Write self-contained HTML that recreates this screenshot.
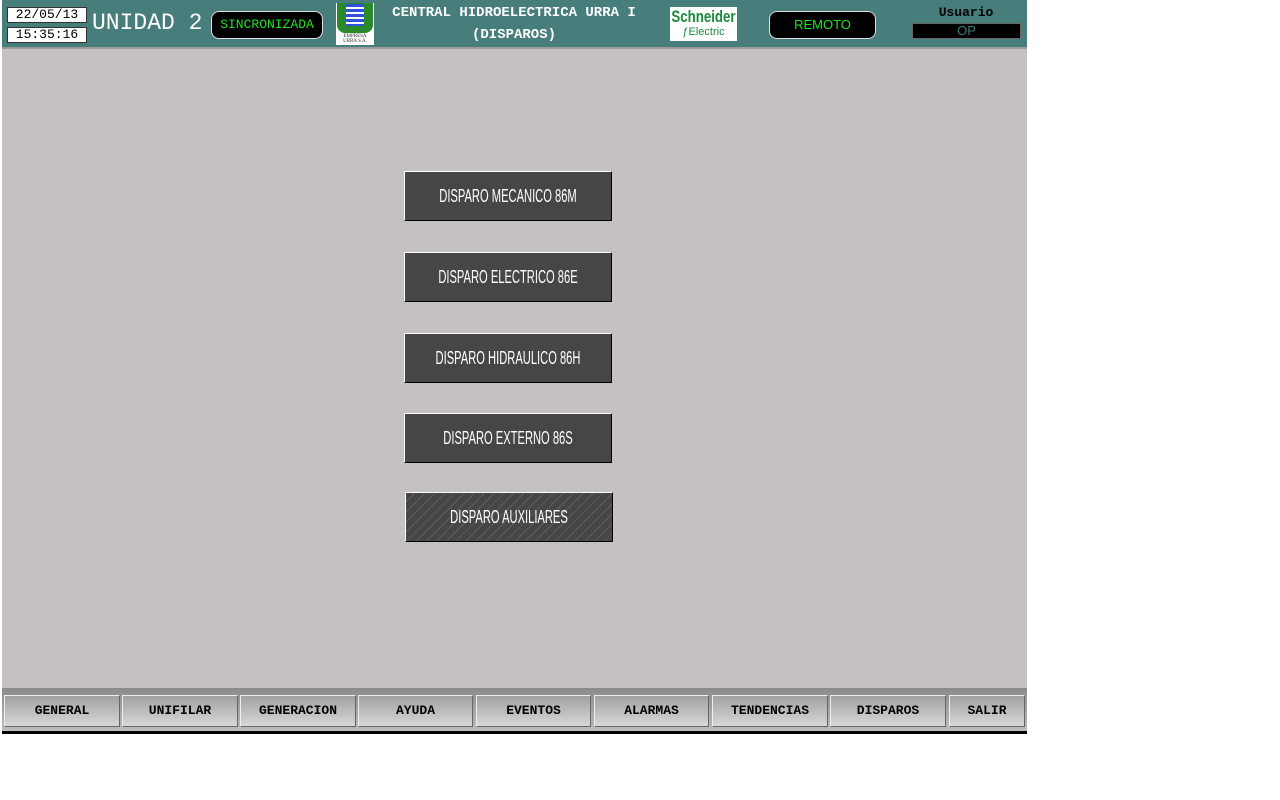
<!DOCTYPE html>
<html><head><style>
body{margin:0;width:1280px;height:800px;background:#fff;position:relative;overflow:hidden;font-family:"Liberation Mono",monospace}
.a{position:absolute}
#hdr{left:2px;top:0;width:1025px;height:47px;background:#477d7b}
#main{left:2px;top:47px;width:1025px;height:641px;background:#c4c0c4;border-top:2px solid #9a9a9a;box-sizing:border-box}
#foot{left:2px;top:688px;width:1025px;height:43px;background:linear-gradient(#8a8a8a,#bdbdbd)}
#line{left:2px;top:731px;width:1025px;height:3px;background:#000}
.fb{position:absolute;top:695px;height:32px;box-sizing:border-box;border:1px solid;border-color:#eee #666 #666 #eee;background:linear-gradient(#a0a0a0,#d8d8d8);font:bold 13px "Liberation Mono",monospace;text-align:center;line-height:30px;color:#000}
.mb{position:absolute;left:404px;width:208px;height:50px;box-sizing:border-box;background:#464646;border:1px solid;border-color:#fff #000 #000 #fff;color:#fff;font:18px "Liberation Sans",sans-serif;line-height:48px;white-space:nowrap;overflow:hidden}
.mb span{position:absolute;left:50%;top:0;transform:translateX(-50%) scaleX(0.62)}
.box{background:#fff;color:#000;border:1px solid #333;font-size:13px;text-align:center;box-sizing:border-box;line-height:14px}
.pill{background:#000;border:1px solid #ddd;border-radius:8px;color:#22e022;text-align:center;box-sizing:border-box}
</style></head><body>
<div id="hdr" class="a"></div>
<div class="a box" style="left:7px;top:7px;width:80px;height:16px">22/05/13</div>
<div class="a box" style="left:7px;top:27px;width:80px;height:16px">15:35:16</div>
<div class="a" style="left:92px;top:9px;color:#fff;font-size:23px;line-height:28px">UNIDAD 2</div>
<div class="a pill" style="left:211px;top:11px;width:112px;height:28px;line-height:26px;font-size:13px">SINCRONIZADA</div>
<div class="a" style="left:336px;top:3px;width:38px;height:42px;background:#fff">
 <div style="position:absolute;left:1px;top:0;width:36px;height:30px;background:#2a8a2a;border-radius:0 0 8px 8px"></div>
 <div style="position:absolute;left:10px;top:1px;width:18px;height:22px;background:repeating-linear-gradient(#3050e0 0 3px,#fff 3px 5px)"></div>
 <div style="position:absolute;left:0;top:31px;width:38px;font:5px serif;text-align:center;color:#333">EMPRESA<br>URRA S.A.</div>
</div>
<div class="a" style="left:378px;top:2px;width:272px;text-align:center;color:#fff;font-weight:bold;font-size:14px;line-height:22px;white-space:nowrap">CENTRAL HIDROELECTRICA URRA I<br>(DISPAROS)</div>
<div class="a" style="left:670px;top:7px;width:67px;height:34px;background:#fff;color:#1a8a3a;text-align:center;overflow:hidden">
 <div style="font:bold 17px 'Liberation Sans',sans-serif;line-height:19px;transform:scaleX(0.78);white-space:nowrap;margin-left:-10px;width:87px">Schneider</div>
 <div style="font:11px 'Liberation Sans',sans-serif;line-height:13px">&#402;Electric</div>
</div>
<div class="a pill" style="left:769px;top:11px;width:107px;height:28px;line-height:26px;font-family:'Liberation Sans',sans-serif;font-size:13px">REMOTO</div>
<div class="a" style="left:912px;top:5px;width:108px;text-align:center;font-weight:bold;font-size:13px;color:#000">Usuario</div>
<div class="a" style="left:912px;top:23px;width:109px;height:16px;background:#000;border:1px solid #666;box-sizing:border-box;color:#3d7a78;text-align:center;font:13px 'Liberation Sans',sans-serif;line-height:14px">OP</div>
<div id="main" class="a"></div>
<div class="mb" style="top:171px"><span>DISPARO MECANICO 86M</span></div>
<div class="mb" style="top:252px"><span>DISPARO ELECTRICO 86E</span></div>
<div class="mb" style="top:333px"><span>DISPARO HIDRAULICO 86H</span></div>
<div class="mb" style="top:413px"><span>DISPARO EXTERNO 86S</span></div>
<div class="mb" style="top:492px;left:405px;background:#464646 repeating-linear-gradient(135deg,transparent 0 6px,#5e5e5e 6px 7px)"><span>DISPARO AUXILIARES</span></div>
<div id="foot" class="a"></div>
<div class="fb" style="left:4px;width:116px">GENERAL</div>
<div class="fb" style="left:122px;width:116px">UNIFILAR</div>
<div class="fb" style="left:240px;width:116px">GENERACION</div>
<div class="fb" style="left:358px;width:115px">AYUDA</div>
<div class="fb" style="left:476px;width:115px">EVENTOS</div>
<div class="fb" style="left:594px;width:115px">ALARMAS</div>
<div class="fb" style="left:712px;width:116px">TENDENCIAS</div>
<div class="fb" style="left:830px;width:116px">DISPAROS</div>
<div class="fb" style="left:949px;width:76px">SALIR</div>
<div id="line" class="a"></div>
</body></html>
